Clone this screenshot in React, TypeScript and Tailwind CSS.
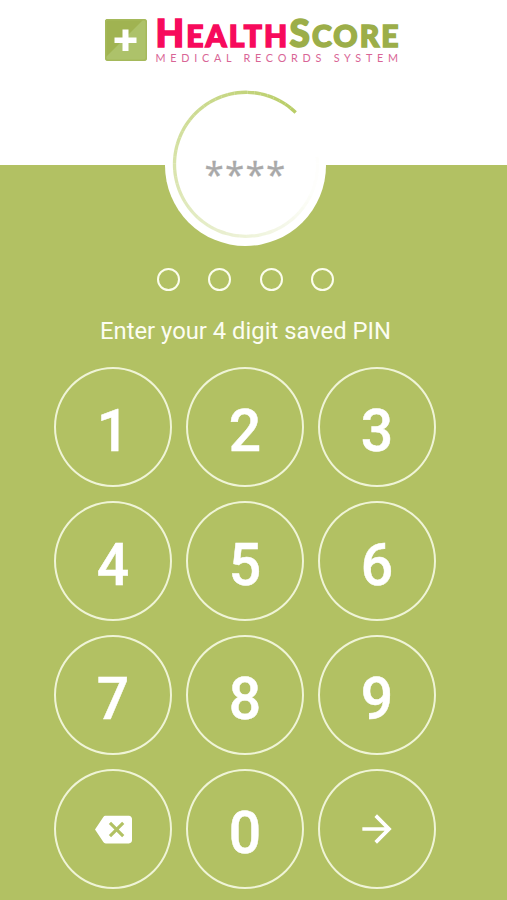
import React, { useState } from 'react';
import { MdBackspace, MdArrowForward } from 'react-icons/md';

const PIN_LENGTH = 4;

// Each segment of the loader ring is a bit lighter than the one before it
const SEGMENTS = 60;
const RING_START = -46;
const RING_SWEEP = 320;

const point = (deg: number) => {
  const rad = (deg * Math.PI) / 180;
  return `${(81 + 71.5 * Math.cos(rad)).toFixed(2)} ${(79.3 + 72 * Math.sin(rad)).toFixed(2)}`;
};

const LoaderRing: React.FC = () => (
  <svg className="absolute inset-0" width="161" height="161" viewBox="0 0 161 161" fill="none">
    {Array.from({ length: SEGMENTS }, (_, i) => {
      const step = RING_SWEEP / SEGMENTS;
      const from = RING_START - i * step;
      const to = from - step;
      const t = i / SEGMENTS;
      return (
        <path
          key={i}
          d={`M${point(from)} A71.5 72 0 0 0 ${point(to)}`}
          stroke="#b9cd67"
          strokeOpacity={Math.max(0.02, 1 - t * 1.08)}
          strokeWidth={3.4 - t * 0.2}
        />
      );
    })}
  </svg>
);

const LogoMark: React.FC = () => (
  <svg width="42" height="42" viewBox="0 0 42 42">
    <rect width="42" height="42" rx="3" fill="#adc26a" />
    <path d="M0 39L39 0H3A3 3 0 0 0 0 3Z" fill="#a0b351" />
    <rect x="0.75" y="0.75" width="40.5" height="40.5" rx="2.5" fill="none" stroke="#a5b95b" strokeWidth="1.5" />
    <path d="M17.5 10.5h6v8h8v5.5h-8v8h-6v-8h-8v-5.5h8z" fill="#fff" />
  </svg>
);

const Logo: React.FC = () => (
  <div className="flex items-start pl-[105px] pt-[19px]">
    <LogoMark />
    <div className="ml-[8.5px] font-[Lato,sans-serif] whitespace-nowrap">
      <div className="flex h-[27px] items-end font-black text-[30px] leading-[22px] tracking-[2.1px] [-webkit-text-stroke:1.5px]">
        <span className="text-[#f70a5c]">
          <span className="text-[37px]">H</span>EALTH
        </span>
        <span className="text-[#9cae49]">
          <span className="text-[37px]">S</span>CORE
        </span>
      </div>
      <div className="mt-[5px] text-[10.8px] leading-[13px] tracking-[4.75px] text-[#d96596]">
        MEDICAL RECORDS SYSTEM
      </div>
    </div>
  </div>
);

interface KeyProps {
  label: string;
  onClick: () => void;
  children: React.ReactNode;
}

const Key: React.FC<KeyProps> = ({ label, onClick, children }) => (
  <button
    aria-label={label}
    onClick={onClick}
    className="flex items-center justify-center w-[118px] h-[120px] rounded-[50%] border-2 border-[#eff4d6] text-white"
  >
    {children}
  </button>
);

export default function App() {
  const [pin, setPin] = useState('');

  const addDigit = (digit: string) => {
    setPin((prev) => (prev.length < PIN_LENGTH ? prev + digit : prev));
  };

  const digitKey = (digit: string) => (
    <Key key={digit} label={digit} onClick={() => addDigit(digit)}>
      <span className="pt-[7px] text-[60px] leading-none font-medium scale-x-95 [-webkit-text-stroke:0.5px]">
        {digit}
      </span>
    </Key>
  );

  return (
    <div className="flex flex-col w-[507px] h-[900px] overflow-hidden bg-[#b2c163] font-[Roboto,sans-serif]">
      <header className="h-[165px] shrink-0 bg-white">
        <Logo />
      </header>

      <main className="flex flex-col items-center w-[491px]">
        <div className="relative flex items-center justify-center w-[161px] h-[161px] -mt-20 rounded-full bg-white">
          <LoaderRing />
          <span className="pt-[15px] font-['Open_Sans',sans-serif] text-[35px] leading-none tracking-[1.2px] text-[#a9a9a9] [-webkit-text-stroke:0.3px]">
            ****
          </span>
        </div>

        <div className="flex gap-[28.4px] mt-[22px]">
          {Array.from({ length: PIN_LENGTH }, (_, i) => (
            <span
              key={i}
              className={`w-[23px] h-[23px] rounded-full border-2 border-[#fbfdec] ${i < pin.length ? 'bg-white' : ''}`}
            />
          ))}
        </div>

        <p className="mt-[25px] text-[23.8px] leading-[30px] text-[#fcfdf2] whitespace-nowrap">
          Enter your 4 digit saved PIN
        </p>

        <div className="grid grid-cols-3 gap-[14px] mt-[21px] mr-px">
          {['1', '2', '3', '4', '5', '6', '7', '8', '9'].map(digitKey)}
          <Key label="Delete" onClick={() => setPin((prev) => prev.slice(0, -1))}>
            <MdBackspace size={37} />
          </Key>
          {digitKey('0')}
          <Key label="Continue" onClick={() => setPin('')}>
            <MdArrowForward size={44} />
          </Key>
        </div>
      </main>
    </div>
  );
}
